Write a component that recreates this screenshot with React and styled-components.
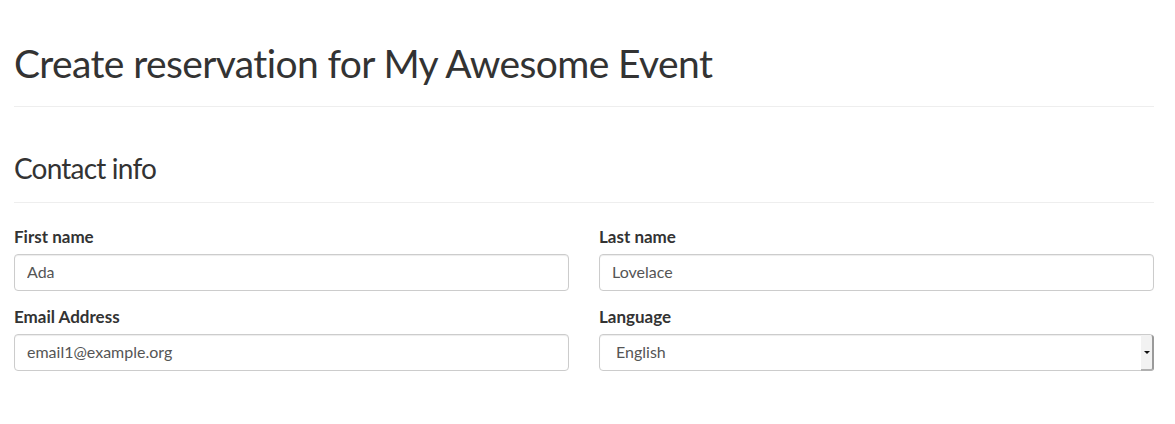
import React from "react";
import styled, { createGlobalStyle } from "styled-components";

const Global = createGlobalStyle`
  html, body { margin: 0; padding: 0; background: #fff; }
  body {
    font-family: "Lato", "Open Sans", sans-serif;
    color: #333;
  }
  * { box-sizing: border-box; }
`;

const Page = styled.div`
  padding: 0 21px 0 14px;
  width: 1175px;
`;

const Title = styled.h1`
  margin: 0;
  padding-top: 39px;
  font-size: 39px;
  font-weight: 400;
  letter-spacing: -0.62px;
  line-height: 48px;
  color: #333;
`;

const Rule = styled.hr`
  margin: ${(p) => p.$top}px 0 0;
  border: 0;
  border-top: 1px solid #eee;
`;

const SectionTitle = styled.h2`
  margin: 0;
  padding-top: 44px;
  font-size: 28px;
  font-weight: 400;
  letter-spacing: -0.8px;
  line-height: 34px;
  color: #333;
`;

const Grid = styled.div`
  display: grid;
  grid-template-columns: 1fr 1fr;
  column-gap: 30px;
  row-gap: 16px;
  padding-top: 24px;
`;

const Field = styled.div`
  display: flex;
  flex-direction: column;
`;

const Label = styled.label`
  font-size: 17px;
  font-weight: 700;
  line-height: 20px;
  margin-bottom: 7px;
  color: #333;
`;

const Input = styled.input`
  height: 37px;
  padding: 5px 12px 7px;
  font-family: inherit;
  font-size: 16px;
  color: #555;
  border: 1px solid #ccc;
  border-radius: 4px;
  background: #fff;
  box-shadow: inset 0 1px 1px rgba(0, 0, 0, 0.075);
  outline: none;
`;

const SelectWrap = styled.div`
  position: relative;
  display: flex;
`;

const Select = styled.select`
  flex: 1;
  appearance: none;
  -webkit-appearance: none;
  height: 37px;
  padding: 5px 16px 7px;
  font-family: inherit;
  font-size: 16px;
  color: #555;
  border: 1px solid #ccc;
  border-radius: 4px;
  background: #fff;
  box-shadow: inset 0 1px 1px rgba(0, 0, 0, 0.075);
  outline: none;
`;

const DropButton = styled.span`
  position: absolute;
  top: 1px;
  right: 0;
  bottom: 0;
  width: 13px;
  background: #f2f2f2;
  border-right: 2px solid #9a9a9a;
  border-bottom: 2px solid #b0b0b0;
  border-radius: 0 3px 3px 0;
  display: flex;
  align-items: center;
  justify-content: center;
  pointer-events: none;

  &::after {
    content: "";
    width: 0;
    height: 0;
    border-left: 3px solid transparent;
    border-right: 3px solid transparent;
    border-top: 3px solid #111;
  }
`;

export default function App() {
  return (
    <Page>
      <Global />
      <Title>Create reservation for My Awesome Event</Title>
      <Rule $top={19} />
      <SectionTitle>Contact info</SectionTitle>
      <Rule $top={17} />
      <Grid>
        <Field>
          <Label>First name</Label>
          <Input defaultValue="Ada" />
        </Field>
        <Field>
          <Label>Last name</Label>
          <Input defaultValue="Lovelace" />
        </Field>
        <Field>
          <Label>Email Address</Label>
          <Input defaultValue="email1@example.org" />
        </Field>
        <Field>
          <Label>Language</Label>
          <SelectWrap>
            <Select defaultValue="en">
              <option value="en">English</option>
              <option value="de">Deutsch</option>
            </Select>
            <DropButton />
          </SelectWrap>
        </Field>
      </Grid>
    </Page>
  );
}
